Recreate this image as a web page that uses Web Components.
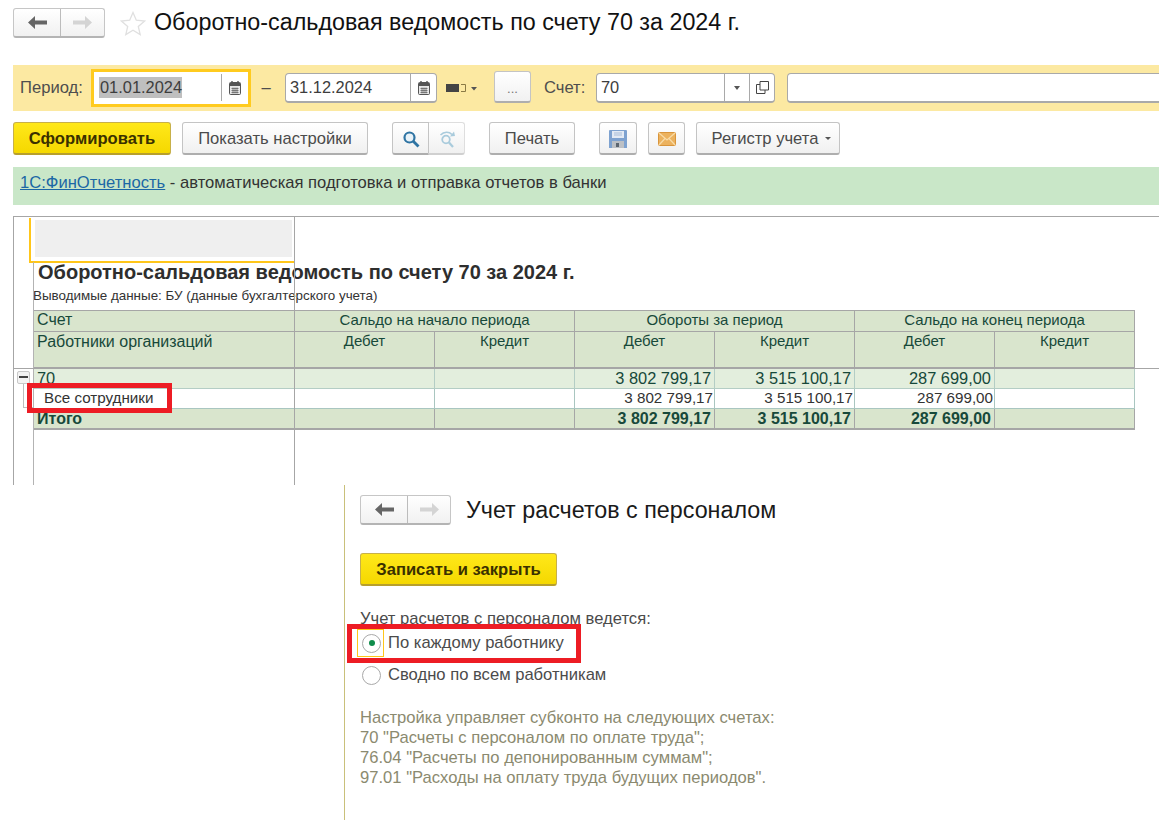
<!DOCTYPE html>
<html lang="ru"><head><meta charset="utf-8"><title>Отчет</title>
<style>html,body{margin:0;background:#fff}body{font-family:"Liberation Sans",Arial,sans-serif}</style>
</head><body>
<x-page></x-page>
<script>
const FONT='"Liberation Sans",Arial,sans-serif';
const ICONS={
 left:c=>`<svg width="19" height="13" viewBox="0 0 19 13"><path d="M0 6.500 7 0v4.500h12v4H7V13z" fill="${c}"/></svg>`,
 right:c=>`<svg width="19" height="13" viewBox="0 0 19 13"><path d="M19 6.500 12 0v4.500H0v4h12V13z" fill="${c}"/></svg>`,
 star:`<svg width="26" height="25" viewBox="0 0 26 25"><path d="M13 1.500l3.300 7.700 8.300.8-6.300 5.500 1.900 8.100L13 19.300l-7.200 4.300 1.900-8.100L1.400 10l8.300-.8z" fill="#fff" stroke="#e0e0e0" stroke-width="1.300"/></svg>`,
 cal:`<svg width="12" height="14" viewBox="0 0 12 14"><rect x=".5" y="1.500" width="11" height="12" rx="1" fill="#e8e8e8" stroke="#555"/><rect x="1" y="2" width="10" height="3" fill="#555"/><path d="M3 0v3M9 0v3" stroke="#555" stroke-width="1.400"/><path d="M2.500 7.500h7M2.500 9.500h7M2.500 11.500h7M4 6.500v6M6 6.500v6M8 6.500v6" stroke="#666" stroke-width=".8"/></svg>`,
 period:`<svg width="32" height="10" viewBox="0 0 32 10"><rect x="0" y="1" width="13" height="8" fill="#444"/><path d="M15 1.500h4.500v7H15" fill="none" stroke="#8a7a45"/><path d="M25 4h6l-3 3.500z" fill="#555"/></svg>`,
 copy:`<svg width="13" height="13" viewBox="0 0 13 13"><path d="M4 .5h8.500V9H4z" fill="none" stroke="#444"/><path d="M4 3.500H.5v9H9V9" fill="none" stroke="#444"/></svg>`,
 search:`<svg width="18" height="18" viewBox="0 0 18 18"><circle cx="7.500" cy="7.500" r="5" fill="#e8f2f8" stroke="#2f74a3" stroke-width="2.200"/><path d="M11 11l5.500 5.500" stroke="#2f74a3" stroke-width="2.800"/></svg>`,
 research:`<svg width="18" height="18" viewBox="0 0 18 18"><circle cx="8" cy="9.500" r="3.800" fill="none" stroke="#a9cbdc" stroke-width="1.800"/><path d="M11 12.500l4 4.500" stroke="#a9cbdc" stroke-width="2.200"/><path d="M2.500 5C6 1.500 11 1.500 14 4.500" fill="none" stroke="#a9cbdc" stroke-width="1.600"/><path d="M12 6.500l5-.5-1-4.500z" fill="#a9cbdc"/></svg>`,
 save:`<svg width="18" height="18" viewBox="0 0 18 18"><path d="M0 1a1 1 0 0 1 1-1h16a1 1 0 0 1 1 1v17H0z" fill="#7ea2d0"/><rect x="3" y="1" width="12" height="7" fill="#e3eaf4"/><path d="M5 3h8M5 5h8" stroke="#a7bcd8"/><rect x="3" y="11" width="12" height="7" fill="#bcc0c5"/><rect x="7" y="13" width="3" height="4" fill="#5c6670"/></svg>`,
 mail:`<svg width="18" height="14" viewBox="0 0 18 14"><rect x=".5" y=".5" width="17" height="13" rx="1" fill="#ecb25e" stroke="#d9953b"/><path d="M1 1l8 7 8-7M1 13l6-6.500M17 13l-6-6.500" fill="none" stroke="#f8dca8" stroke-width="1.200"/></svg>`
};
const def=(name,css,html,extra)=>customElements.define(name,class extends HTMLElement{
 connectedCallback(){if(this.shadowRoot)return;const s=this.attachShadow({mode:'open'});
  s.innerHTML=`<style>${css}</style>`+(typeof html==='function'?html(this):html);extra&&extra(s,this)}});
const a=(e,n,d='')=>e.getAttribute(n)??d;

def('x-nav',`:host{display:inline-flex;box-sizing:border-box;height:30px;border:1px solid #c6c6c6;border-bottom:2px solid #b4b4b4;border-radius:3px;background:linear-gradient(#fff,#f1f1f1);flex:none}
 span{display:flex;align-items:center;justify-content:center;height:100%;box-sizing:border-box}span+span{border-left:1px solid #bcbcbc}`,
 e=>`<span style="width:${a(e,'w1',46)}px">${ICONS.left('#666')}</span><span style="width:${a(e,'w2',44)}px">${ICONS.right('#d4d4d4')}</span>`);

def('x-btn',`:host{display:inline-flex;align-items:center;justify-content:center;box-sizing:border-box;height:33px;padding-top:1px;border:1px solid #c4c4c4;border-bottom:2px solid #aeaeae;border-radius:3px;background:linear-gradient(#fff,#f0f0f0);font:16.600px ${FONT};color:#4b4b4b;white-space:nowrap}
 :host([primary]){background:linear-gradient(#ffe81a,#f5d800);border:1px solid #c7b04a;border-bottom:2px solid #b79f2c;font-weight:700;color:#3a3000}
 :host([faint]){border-color:#dedede;border-bottom-color:#d0d0d0}
 i{display:block;margin-left:7px;width:0;height:0;border:3px solid transparent;border-top:3px solid #555;border-bottom:0}`,
 e=>`<slot></slot>${e.hasAttribute('caret')?'<i></i>':''}`);

def('x-field',`:host{display:inline-flex;box-sizing:border-box;height:30px;border:1px solid #a9a9a9;border-bottom:2px solid #a9a9a9;border-radius:4px;background:#fff;font:16.400px ${FONT};color:#3d3d3d;align-items:stretch}
 .v{flex:1;padding-left:4px;display:flex;align-items:center;white-space:nowrap;min-width:0}
 .b{border-left:1px solid #a9a9a9;display:flex;align-items:center;justify-content:center;flex:none}
 .c{width:0;height:0;border:3.500px solid transparent;border-top:4px solid #555;border-bottom:0}`,
 e=>{const kinds=a(e,'btns').split(' ').filter(Boolean);
  return `<div class="v"><slot></slot></div>`+kinds.map(k=>`<div class="b" style="width:${k==='cal'?25:24}px">${k==='drop'?'<span class="c"></span>':ICONS[k]}</div>`).join('')});

def('x-focus-date',`:host{display:inline-flex;box-sizing:border-box;width:160px;height:38px;border:3px solid #ffcb1f;background:#fff;font:16.400px ${FONT};color:#3d3d3d;align-items:stretch;flex:none}
 .v{flex:1;display:flex;align-items:center;padding:1px 0 3px 5px}.v span{background:#bfbfbf;line-height:21px;padding:0 0 0 1px}
 .b{width:26px;border-left:1px solid #a9a9a9;display:flex;align-items:center;justify-content:center;margin-top:2px;margin-bottom:3px}`,
 `<div class="v"><span><slot></slot></span></div><div class="b">${ICONS.cal}</div>`);

def('x-header',`:host{display:flex;align-items:flex-start;box-sizing:border-box;height:65px;padding:8px 0 0 13px;font:23.300px ${FONT};color:#111}
 .s{margin:3px 8px 0 15px;line-height:0}.t{line-height:29px}`,
 `<x-nav w1="46" w2="44"></x-nav><div class="s">${ICONS.star}</div><div class="t"><slot></slot></div>`);

def('x-filter',`:host{display:flex;align-items:center;box-sizing:border-box;height:46px;margin-left:13px;padding-left:7px;background:#fce9a2;font:16.600px ${FONT};color:#4e4e4e;overflow:hidden;white-space:nowrap}
 .lab{width:71px;flex:none}.dash{box-sizing:border-box;width:34px;padding-right:4px;text-align:center;flex:none}.per{margin:0 16px 0 9px;line-height:0;flex:none}
 .dots{flex:none;width:37px;height:32px;box-sizing:border-box;border:1px solid #c4c4c4;border-bottom:2px solid #aeaeae;border-radius:3px;background:linear-gradient(#fff,#f1f1f1);font-size:13px;color:#777;display:flex;align-items:flex-end;justify-content:center;padding-bottom:5px;margin-top:-2px}
 .sch{margin-left:13px;width:52px;flex:none}x-field{flex:none}`,
 `<span class="lab">Период:</span><x-focus-date>01.01.2024</x-focus-date><span class="dash">–</span>
 <x-field btns="cal" style="width:152px">31.12.2024</x-field><span class="per">${ICONS.period}</span><div class="dots">...</div><span class="sch">Счет:</span>
 <x-field btns="drop copy" style="width:179px">70</x-field><x-field style="width:400px;margin-left:12px"></x-field>`);

def('x-actions',`:host{display:flex;align-items:center;height:33px;margin:11px 0 12px 13px}
 .pair{display:flex;margin:0 24px}.pair x-btn:first-child{border-radius:3px 0 0 3px}.pair x-btn:last-child{border-left:0;border-radius:0 3px 3px 0}`,
 `<x-btn primary style="width:158px">Сформировать</x-btn>
 <x-btn style="width:186px;margin-left:11px">Показать настройки</x-btn>
 <div class="pair"><x-btn style="width:37px">${ICONS.search}</x-btn><x-btn faint style="width:36px">${ICONS.research}</x-btn></div>
 <x-btn style="width:86px">Печать</x-btn>
 <x-btn style="width:38px;margin-left:24px">${ICONS.save}</x-btn>
 <x-btn style="width:37px;margin-left:11px">${ICONS.mail}</x-btn>
 <x-btn caret style="width:144px;margin-left:11px;padding-left:7px">Регистр учета</x-btn>`);

def('x-banner',`:host{display:block;box-sizing:border-box;height:38px;margin:0 0 11px 13px;padding:7px 0 0 7px;background:#c9e7c8;font:16.600px/17px ${FONT};color:#333}
 a{color:#1b67a5;text-decoration:underline}`,
 `<a href="#">1С:ФинОтчетность</a> - автоматическая подготовка и отправка отчетов в банки`);

const cols=[262,140,140,140,140,140,140];
def('x-grid',`:host{display:grid;grid-template-columns:${cols.map(c=>c+'px').join(' ')};grid-template-rows:22px 36px 21px 20px 21px;width:1102px;font:15px ${FONT};color:#17493a;box-sizing:border-box}
 div{box-sizing:border-box;padding:0 3px;white-space:nowrap;overflow:hidden;border-right:1px solid #a6a6a6;border-bottom:1px solid #a6a6a6;line-height:19px}
 .h{background:#d9e5cd}.c{text-align:center}.top{border-top:1px solid #a6a6a6;line-height:18px}.r{text-align:right;padding-right:3px}
 .f{font-size:16px}
 .a{background:#e3eedd;border-color:#b4cdc5;border-bottom-color:#b4cdc5;font-size:16.400px;line-height:21px}.w{background:#fff;border-color:#a9c6c0;color:#333;font-size:15.200px;line-height:18px}.w.r{padding-right:1px}
 .t{background:#d9e5cd;font-weight:700;border-bottom:2px solid #a6a6a6;border-right-color:#a6a6a6;line-height:20px;font-size:16px}
 .s1{grid-column:span 2}.l0{padding-left:4px;border-left:0}.ind{padding-left:11px}.sub{line-height:17px}`,
 ()=>{
  const row=(cls,first,vals,firstCls='')=>`<div class="${cls} l0 ${firstCls}">${first}</div>`+vals.map(v=>`<div class="${cls} r">${v}</div>`).join('');
  return `<div class="h top l0 f">Счет</div><div class="h top c s1">Сальдо на начало периода</div><div class="h top c s1">Обороты за период</div><div class="h top c s1">Сальдо на конец периода</div>
  <div class="h l0 f">Работники организаций</div>${['Дебет','Кредит','Дебет','Кредит','Дебет','Кредит'].map(t=>`<div class="h c sub">${t}</div>`).join('')}`
  +row('a','70',['','','3 802 799,17','3 515 100,17','287 699,00',''])
  +row('w','Все сотрудники',['','','3 802 799,17','3 515 100,17','287 699,00',''],'ind')
  +row('t','Итого',['','','3 802 799,17','3 515 100,17','287 699,00','']);
 });

def('x-report',`:host{display:block;position:relative;box-sizing:border-box;height:269px;margin-left:13px;border-left:1px solid #a6a6a6;border-top:1px solid #a6a6a6;overflow:hidden}
 .sel{box-sizing:border-box;height:45px;width:265px;margin:1px 0 0 15px;border-left:2px solid #ffc61a;border-bottom:2px solid #ffc61a;padding:2px 2px 4px 4px}
 .sel div{height:100%;background:#efefef}
 h1{margin:-2px 0 0 24px;font:bold 20px/22px ${FONT};color:#2e2e2e;white-space:nowrap}
 p{margin:4px 0 6px 19px;font:13.400px/17px ${FONT};color:#333;white-space:nowrap}
 x-grid{margin-left:19px}
 .v0{position:absolute;left:280px;top:0;bottom:0;width:1px;background:#a6a6a6}
 .v1{position:absolute;left:19px;top:45px;bottom:0;width:1px;background:#b3b3b3}
 .hl{position:absolute;left:0;right:0;top:151px;height:1px;background:#a6a6a6}
 .minus{position:absolute;left:3px;top:154px;width:13px;height:13px;box-sizing:border-box;border:1px solid #c8c8c8;border-radius:2px;background:#f3f3f3}
 .minus:after{content:"";position:absolute;left:1px;right:1px;top:4px;height:2px;background:#444}
 .tree{position:absolute;left:9px;top:167px;width:10px;height:24px;box-sizing:border-box;border-left:1px solid #bdbdbd;border-bottom:1px solid #bdbdbd}
 .red{position:absolute;left:13px;top:166px;width:145px;height:30px;box-sizing:border-box;border:5px solid #ed1c24}`,
 `<div class="sel"><div></div></div><h1>Оборотно-сальдовая ведомость по счету 70 за 2024 г.</h1><p>Выводимые данные: БУ (данные бухгалтерского учета)</p><x-grid></x-grid>
 <div class="v1"></div><div class="v0"></div><div class="hl"></div><div class="tree"></div><div class="minus"></div><div class="red"></div>`);

def('x-radio',`:host{display:flex;align-items:center;height:32px;font:16.600px ${FONT};color:#4b4b4b;white-space:nowrap}
 .o{box-sizing:border-box;width:19px;height:19px;border:1px solid #a9a9a9;border-radius:50%;margin:0 7px 0 2px;display:flex;align-items:center;justify-content:center;background:#fff;flex:none}
 .o i{width:6px;height:6px;border-radius:50%;background:#0f8c4b}`,
 e=>`<div class="o">${e.hasAttribute('checked')?'<i></i>':''}</div><slot></slot>`);

def('x-panel',`:host{display:block;position:relative;box-sizing:border-box;height:335px;margin-left:344px;border-left:1px solid #c9c07a;padding:10px 0 0 15px;font:16.600px ${FONT};overflow:hidden}
 .head{display:flex;align-items:center;height:30px;font-size:23.300px;color:#1a1a1a}.head span{margin-left:15px}
 x-btn{margin-top:28px;width:197px}
 .lbl{margin-top:24px;line-height:18px;color:#4b4b4b}
 .rs{margin-top:-1px}
 .note{margin-top:17px;line-height:20px;color:#8b8a6f}
 .foc{position:absolute;left:12px;top:144px;width:27px;height:28px;box-sizing:border-box;border:1px solid #ffc61a}
 .red{position:absolute;left:2px;top:139px;width:234px;height:39px;box-sizing:border-box;border:5px solid #ed1c24}`,
 `<div class="head"><x-nav w1="46" w2="43"></x-nav><span>Учет расчетов с персоналом</span></div>
 <x-btn primary>Записать и закрыть</x-btn>
 <div class="lbl">Учет расчетов с персоналом ведется:</div>
 <div class="rs"><x-radio checked>По каждому работнику</x-radio><x-radio>Сводно по всем работникам</x-radio></div>
 <div class="note">Настройка управляет субконто на следующих счетах:<br>70 "Расчеты с персоналом по оплате труда";<br>76.04 "Расчеты по депонированным суммам";<br>97.01 "Расходы на оплату труда будущих периодов".</div>
 <div class="red"></div><div class="foc"></div>`);

def('x-page',`:host{display:block;width:1159px;height:820px;overflow:hidden;background:#fff}`,
 `<x-header>Оборотно-сальдовая ведомость по счету 70 за 2024 г.</x-header><x-filter></x-filter><x-actions></x-actions><x-banner></x-banner><x-report></x-report><x-panel></x-panel>`);
</script>
</body></html>
